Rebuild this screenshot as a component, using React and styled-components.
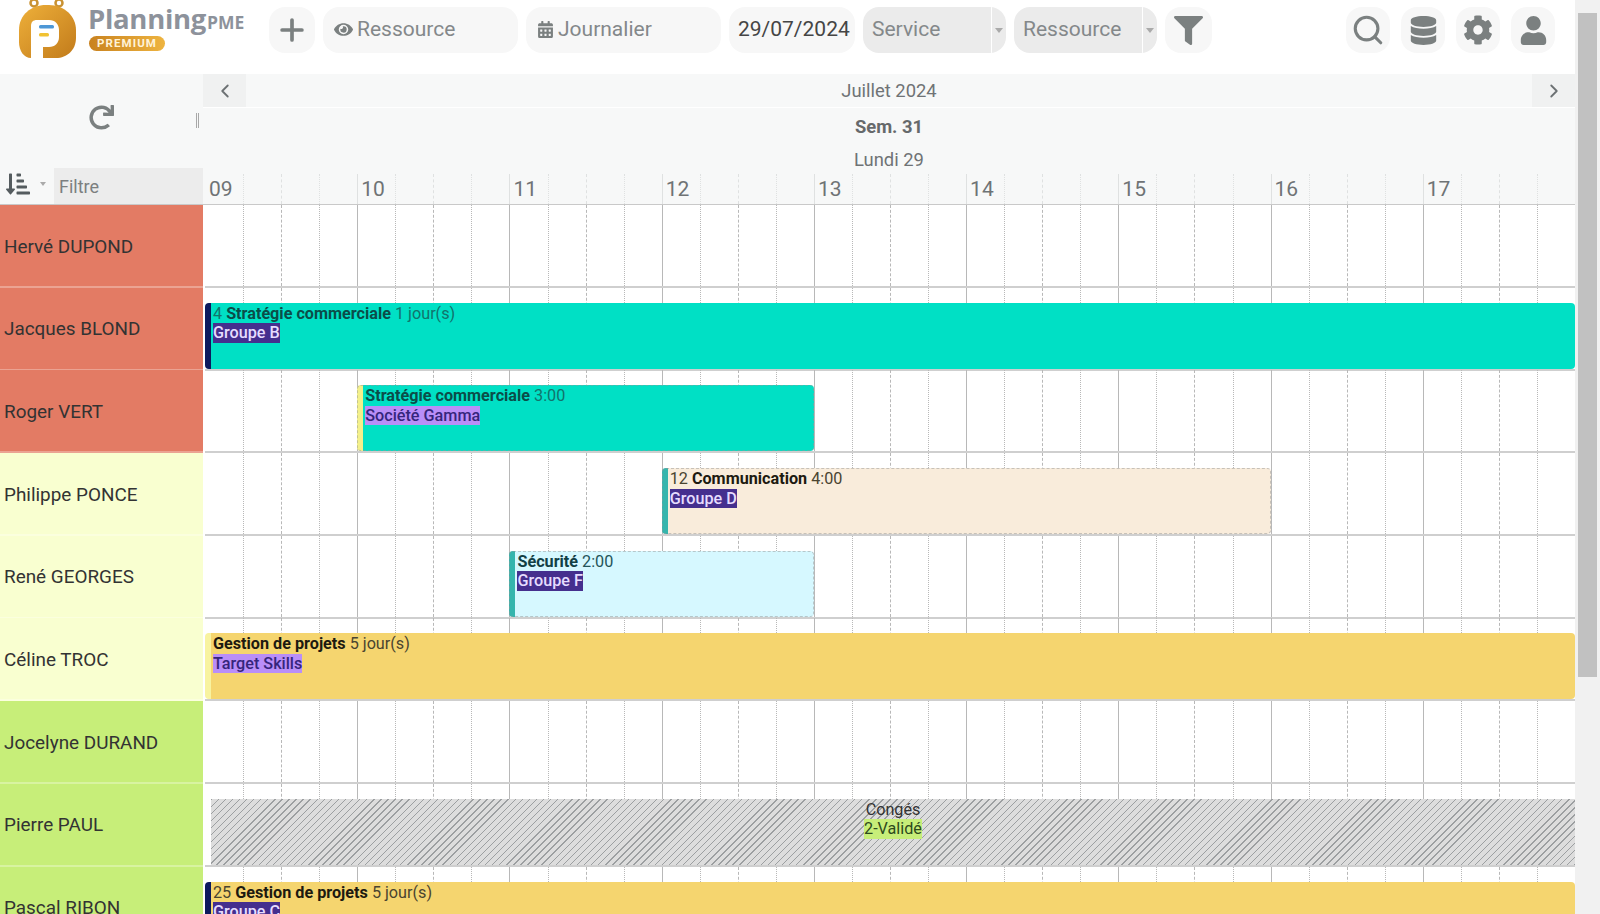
import React from 'react';
import styled, { createGlobalStyle } from 'styled-components';
import {
  FaCalendarAlt,
  FaCog,
  FaDatabase,
  FaEye,
  FaFilter,
  FaRedo,
  FaSortAmountDownAlt,
  FaUser,
} from 'react-icons/fa';
import { ChevronLeft, ChevronRight, Plus, Search } from 'lucide-react';

const HOURS = ['09', '10', '11', '12', '13', '14', '15', '16', '17'];
const ICON = '#7b8080';
const GRID = 'repeat(36, 1fr)';

const RED = '#e37b64';
const PALE = '#f9ffd0';
const GREEN = '#c7ee79';
const TEAL_TEXT = { text: '#12736c', strong: '#0b4d49' };
const DARK_TEXT = { text: '#4a4430', strong: '#1d1a10' };

const DARK_BADGE = { bg: '#452f8e', fg: '#e6dcff' };
const LIGHT_BADGE = { bg: '#b98ef8', fg: '#35257c' };

const rows = [
  { name: 'Hervé DUPOND', color: RED },
  {
    name: 'Jacques BLOND',
    color: RED,
    event: {
      from: 1, to: 37, bg: '#00e0c5', bar: '#0d1a5e', ...TEAL_TEXT,
      num: '4', title: 'Stratégie commerciale', time: '1 jour(s)', badge: 'Groupe B', badgeColors: DARK_BADGE,
    },
  },
  {
    name: 'Roger VERT',
    color: RED,
    event: {
      from: 5, to: 17, bg: '#00e0c5', bar: '#f3f08c', ...TEAL_TEXT, dashed: true,
      title: 'Stratégie commerciale', time: '3:00', badge: 'Société Gamma', badgeColors: LIGHT_BADGE,
    },
  },
  {
    name: 'Philippe PONCE',
    color: PALE,
    event: {
      from: 13, to: 29, bg: '#f9ecdb', bar: '#35b5ad', ...DARK_TEXT, dashed: true,
      num: '12', title: 'Communication', time: '4:00', badge: 'Groupe D', badgeColors: DARK_BADGE,
    },
  },
  {
    name: 'René GEORGES',
    color: PALE,
    event: {
      from: 9, to: 17, bg: '#d6f8ff', bar: '#35b5ad', text: '#24555a', strong: '#123f45', dashed: true,
      title: 'Sécurité', time: '2:00', badge: 'Groupe F', badgeColors: DARK_BADGE,
    },
  },
  {
    name: 'Céline TROC',
    color: PALE,
    event: {
      from: 1, to: 37, bg: '#f5d56f', bar: '#f8f3a0', ...DARK_TEXT,
      title: 'Gestion de projets', time: '5 jour(s)', badge: 'Target Skills', badgeColors: LIGHT_BADGE,
    },
  },
  { name: 'Jocelyne DURAND', color: GREEN },
  { name: 'Pierre PAUL', color: GREEN, leave: { title: 'Congés', status: '2-Validé' } },
  {
    name: 'Pascal RIBON',
    color: GREEN,
    event: {
      from: 1, to: 37, bg: '#f5d56f', bar: '#0d1a5e', ...DARK_TEXT,
      num: '25', title: 'Gestion de projets', time: '5 jour(s)', badge: 'Groupe C', badgeColors: DARK_BADGE,
    },
  },
];

const GlobalStyle = createGlobalStyle`
  html, body {
    margin: 0;
    height: 100%;
    overflow: hidden;
    background: #fff;
    font-family: Roboto, "Liberation Sans", sans-serif;
  }
`;

const Page = styled.div`
  display: flex;
  height: 914px;
  overflow: hidden;
`;

const Main = styled.div`
  flex: 1;
  min-width: 0;
  display: flex;
  flex-direction: column;
`;

const Scrollbar = styled.div`
  width: 25px;
  flex: none;
  background: #f1f1f1;
  padding: 13px 3px 0;
  box-sizing: border-box;
`;

const ScrollThumb = styled.div`
  height: 664px;
  background: #c1c1c1;
`;

const Toolbar = styled.header`
  height: 74px;
  flex: none;
  box-sizing: border-box;
  display: flex;
  align-items: flex-start;
  gap: 8px;
  padding: 7px 20px 0 19px;
  overflow: hidden;
`;

const LogoBlock = styled.div`
  width: 242px;
  height: 60px;
  margin-top: -7px;
  flex: none;
  display: flex;
  gap: 12px;
`;

const LogoText = styled.div`
  padding-top: 5px;
  display: flex;
  flex-direction: column;
  align-items: flex-start;
`;

const Wordmark = styled.div`
  font-family: "Open Sans", Roboto, sans-serif;
  font-size: 27.5px;
  line-height: 28px;
  font-weight: 700;
  letter-spacing: -0.3px;
  color: #8d929b;
  white-space: nowrap;
  small {
    font-size: 17.5px;
    letter-spacing: 0;
    margin-left: 1px;
  }
`;

const PremiumBadge = styled.div`
  width: 76px;
  height: 15px;
  margin-left: 1px;
  border-radius: 8px;
  background: linear-gradient(90deg, #c9821f, #eeb440);
  color: #fff3d8;
  font-size: 11.5px;
  line-height: 15px;
  font-weight: 700;
  letter-spacing: 1.1px;
  text-align: center;
`;

const IconButton = styled.button`
  width: ${(p) => p.$width || 46}px;
  height: 46px;
  flex: none;
  padding: 0;
  border: 0;
  border-radius: 16px;
  background: #f7f7f7;
  color: ${ICON};
  display: flex;
  align-items: center;
  justify-content: center;
`;

const Pill = styled.div`
  width: 195px;
  height: 46px;
  flex: none;
  box-sizing: border-box;
  padding: 0 0 2px 11px;
  border-radius: 16px;
  background: #f7f7f7;
  color: #84888a;
  font-size: 21px;
  display: flex;
  align-items: center;
  gap: 4px;
  svg {
    color: ${ICON};
  }
`;

const DatePill = styled(Pill)`
  width: 126px;
  padding-left: 9px;
  color: #454545;
`;

const SelectPill = styled.div`
  width: 143px;
  height: 46px;
  flex: none;
  box-sizing: border-box;
  border-radius: 16px;
  background: #ebebeb;
  color: #84888a;
  font-size: 21px;
  padding-left: 9px;
  display: grid;
  grid-template-columns: 1fr 15px;
  align-items: center;
  overflow: hidden;
`;

const SelectLabel = styled.span`
  padding-bottom: 2px;
`;

const SelectCaret = styled.span`
  height: 100%;
  border-left: 1px solid #fff;
  display: flex;
  align-items: center;
  justify-content: center;
  &::after {
    content: '';
    border: 4px solid transparent;
    border-top: 5px solid #aaa;
    margin-top: 5px;
  }
`;

const Spacer = styled.div`
  flex: 1;
`;

const ActionGroup = styled.div`
  display: flex;
  gap: 11px;
`;

const HeaderBlock = styled.div`
  height: 130px;
  flex: none;
  display: grid;
  grid-template-columns: 203px 1fr;
  background: #f7f8f8;
  border-bottom: 1px solid #c9c9c9;
`;

const HeaderLeft = styled.div`
  display: flex;
  flex-direction: column;
`;

const RefreshArea = styled.div`
  position: relative;
  height: 94px;
  box-sizing: border-box;
  padding-bottom: 8px;
  display: flex;
  align-items: center;
  justify-content: center;
  color: ${ICON};
`;

const Splitter = styled.span`
  position: absolute;
  right: 4px;
  top: 39px;
  width: 3px;
  height: 15px;
  border-left: 1px solid #a8a8a8;
  border-right: 1px solid #a8a8a8;
  box-sizing: border-box;
`;

const FilterRow = styled.div`
  flex: 1;
  display: flex;
  align-items: stretch;
`;

const SortButton = styled.div`
  width: 54px;
  box-sizing: border-box;
  padding: 0 0 5px 6px;
  color: #555c5f;
  display: flex;
  align-items: center;
  gap: 10px;
  &::after {
    content: '';
    border: 3px solid transparent;
    border-top: 4px solid #aaa;
    margin-top: 4px;
  }
`;

const FilterField = styled.div`
  flex: 1;
  background: #ececec;
  color: #7c7f80;
  font-size: 18px;
  padding-left: 5px;
  display: flex;
  align-items: center;
`;

const HeaderRight = styled.div`
  min-width: 0;
  display: flex;
  flex-direction: column;
  color: #6f7375;
`;

const MonthRow = styled.div`
  height: 33px;
  display: flex;
  align-items: center;
  justify-content: space-between;
  border-bottom: 1px solid #fff;
  font-size: 18.4px;
`;

const NavButton = styled.div`
  width: 43px;
  height: 100%;
  background: #f0f1f1;
  color: #6c7173;
  display: flex;
  align-items: center;
  justify-content: center;
`;

const WeekRow = styled.div`
  height: 37px;
  display: flex;
  align-items: center;
  justify-content: center;
  font-size: 18.4px;
  font-weight: 700;
  color: #66696b;
`;

const DayRow = styled.div`
  height: 29px;
  display: flex;
  align-items: center;
  justify-content: center;
  font-size: 18.4px;
`;

const HourRow = styled.div`
  position: relative;
  flex: 1;
  display: grid;
  grid-template-columns: repeat(9, 1fr);
  margin-left: 2px;
  font-size: 21px;
  color: #6f7375;
`;

const HourLabel = styled.div`
  padding: 2px 0 0 4px;
  line-height: 26px;
`;

const Lines = styled.div`
  position: absolute;
  inset: 0;
  display: grid;
  grid-template-columns: ${GRID};
  pointer-events: none;
`;

const LINE_STYLE = ['solid', 'dotted', 'dashed', 'dotted'];

const Line = styled.span`
  border-left: 1px ${(p) => LINE_STYLE[p.$index % 4]} ${(p) => (p.$faint ? '#dfe1e1' : '#b8b8b8')};
  &:first-child {
    border-left-color: transparent;
  }
`;

const Row = styled.div`
  height: 82.7px;
  flex: none;
  display: grid;
  grid-template-columns: 203px 1fr;
`;

const NameCell = styled.div`
  background: ${(p) => p.$color};
  color: #333;
  font-size: 18.9px;
  padding: 0 0 1px 4px;
  display: flex;
  align-items: center;
  box-shadow: inset 0 -2px 0 rgba(255, 255, 255, 0.3);
`;

const Timeline = styled.div`
  position: relative;
  margin-left: 2px;
  padding-top: 15px;
  box-sizing: border-box;
  border-bottom: 2px solid #cfcfcf;
  display: grid;
  grid-template-columns: ${GRID};
  grid-template-rows: 66px;
`;

const EventBar = styled.div`
  position: relative;
  grid-column: ${(p) => p.$from} / ${(p) => p.$to};
  box-sizing: border-box;
  min-width: 0;
  background: ${(p) => p.$bg};
  border-left: 6px solid ${(p) => p.$bar};
  border-radius: 4px;
  padding: 1px 0 0 2px;
  font-size: 16.2px;
  line-height: 19.5px;
  color: ${(p) => p.$text};
  outline: ${(p) => (p.$dashed ? '1px dashed rgba(150, 150, 150, 0.5)' : 'none')};
  outline-offset: -1px;
  overflow: hidden;
  white-space: nowrap;
  strong {
    color: ${(p) => p.$strong};
    font-weight: 700;
  }
`;

const Badge = styled.span`
  display: table;
  background: ${(p) => p.$bg};
  color: ${(p) => p.$fg};
  font-weight: 500;
`;

const LeaveBar = styled.div`
  position: relative;
  grid-column: 1 / 37;
  margin-left: 6px;
  padding-top: 1px;
  box-sizing: border-box;
  font-size: 16.2px;
  line-height: 19.5px;
  color: #333;
  text-align: center;
  background: repeating-linear-gradient(135deg, #9c9fa1 0 1px, #dddddd 1px 5px);
`;

const LeaveStatus = styled.span`
  display: inline-block;
  background: ${GREEN};
  color: #2d4a1c;
`;

const GridLines = ({ faint, count = 36 }) => (
  <Lines>
    {Array.from({ length: count }, (_, i) => (
      <Line key={i} $index={i} $faint={faint} />
    ))}
  </Lines>
);

const PlanningEvent = ({ event }) => (
  <EventBar
    $from={event.from}
    $to={event.to}
    $bg={event.bg}
    $bar={event.bar}
    $text={event.text}
    $strong={event.strong}
    $dashed={event.dashed}>
    {event.num && `${event.num} `}
    <strong>{event.title}</strong> {event.time}
    <Badge $bg={event.badgeColors.bg} $fg={event.badgeColors.fg}>
      {event.badge}
    </Badge>
  </EventBar>
);

const Logo = () => (
  <svg width="57" height="60" viewBox="0 0 57 60" fill="none">
    <defs>
      <linearGradient id="logoGold" x1="0" y1="0" x2="1" y2="1">
        <stop offset="0" stopColor="#eeb03a" />
        <stop offset="1" stopColor="#c27b1b" />
      </linearGradient>
    </defs>
    <circle cx="15" cy="3" r="3.5" stroke="#c99232" strokeWidth="2.5" />
    <circle cx="40" cy="3" r="3.5" stroke="#c99232" strokeWidth="2.5" />
    <path
      d="M27 5h3c15 0 27 11 27 25v8c0 12-9 20-20 20H12C5 58 0 51 0 42V30C0 15 12 5 27 5z"
      fill="url(#logoGold)"
    />
    <path
      d="M18 20h12c6 0 10 4 10 10v7c0 6-4 10-10 10h-6v12H12V26c0-4 2-6 6-6z"
      fill="#fff"
    />
    <rect x="20" y="25" width="15" height="3.5" rx="1.5" fill="#4d97d6" />
    <rect x="20" y="33" width="10" height="3.5" rx="1.5" fill="#f1c232" />
  </svg>
);

export default function App() {
  return (
    <Page>
      <GlobalStyle />
      <Main>
        <Toolbar>
          <LogoBlock>
            <Logo />
            <LogoText>
              <Wordmark>
                Planning<small>PME</small>
              </Wordmark>
              <PremiumBadge>PREMIUM</PremiumBadge>
            </LogoText>
          </LogoBlock>
          <IconButton>
            <Plus size={34} strokeWidth={2.6} />
          </IconButton>
          <Pill>
            <FaEye size={19} />
            Ressource
          </Pill>
          <Pill>
            <FaCalendarAlt size={17} />
            Journalier
          </Pill>
          <DatePill>29/07/2024</DatePill>
          <SelectPill>
            <SelectLabel>Service</SelectLabel>
            <SelectCaret />
          </SelectPill>
          <SelectPill>
            <SelectLabel>Ressource</SelectLabel>
            <SelectCaret />
          </SelectPill>
          <IconButton $width={47}>
            <FaFilter size={29} />
          </IconButton>
          <Spacer />
          <ActionGroup>
            <IconButton $width={44}>
              <Search size={34} strokeWidth={2.2} />
            </IconButton>
            <IconButton $width={44}>
              <FaDatabase size={29} />
            </IconButton>
            <IconButton $width={44}>
              <FaCog size={30} />
            </IconButton>
            <IconButton $width={44}>
              <FaUser size={29} />
            </IconButton>
          </ActionGroup>
        </Toolbar>

        <HeaderBlock>
          <HeaderLeft>
            <RefreshArea>
              <FaRedo size={25} />
              <Splitter />
            </RefreshArea>
            <FilterRow>
              <SortButton>
                <FaSortAmountDownAlt size={24} />
              </SortButton>
              <FilterField>Filtre</FilterField>
            </FilterRow>
          </HeaderLeft>
          <HeaderRight>
            <MonthRow>
              <NavButton>
                <ChevronLeft size={22} />
              </NavButton>
              Juillet 2024
              <NavButton>
                <ChevronRight size={22} />
              </NavButton>
            </MonthRow>
            <WeekRow>Sem. 31</WeekRow>
            <DayRow>Lundi 29</DayRow>
            <HourRow>
              <GridLines faint />
              {HOURS.map((hour) => (
                <HourLabel key={hour}>{hour}</HourLabel>
              ))}
            </HourRow>
          </HeaderRight>
        </HeaderBlock>

        {rows.map((row) => (
          <Row key={row.name}>
            <NameCell $color={row.color}>{row.name}</NameCell>
            <Timeline>
              <GridLines />
              {row.event && <PlanningEvent event={row.event} />}
              {row.leave && (
                <LeaveBar>
                  {row.leave.title}
                  <br />
                  <LeaveStatus>{row.leave.status}</LeaveStatus>
                </LeaveBar>
              )}
            </Timeline>
          </Row>
        ))}
      </Main>
      <Scrollbar>
        <ScrollThumb />
      </Scrollbar>
    </Page>
  );
}
